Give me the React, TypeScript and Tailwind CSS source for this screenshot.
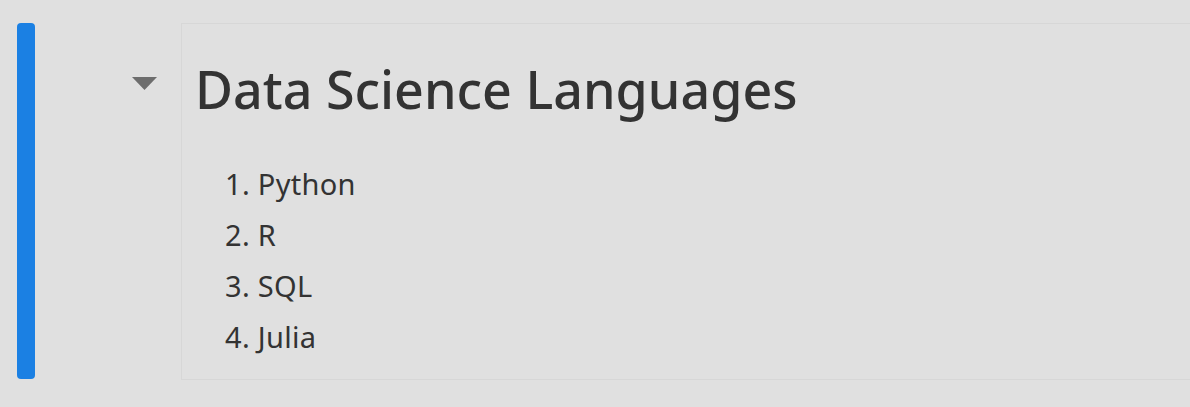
export default function App() {
  const items = ["Python", "R", "SQL", "Julia"];
  return (
    <div
      className="w-[1190px] h-[407px] overflow-hidden bg-[#e0e0e0] flex pt-[23px] pl-[17px]"
      style={{ fontFamily: '"Noto Sans", "Open Sans", sans-serif' }}
    >
      <div className="w-[18px] h-[356px] rounded-[4px] bg-[#1b80e3] shrink-0" />
      <div className="w-[146px] shrink-0 relative">
        <svg
          className="absolute left-[97px] top-[54px]"
          width="25"
          height="13"
          viewBox="0 0 25 13"
        >
          <polygon points="0,0 25,0 12.5,13" fill="#6d6d6d" />
        </svg>
      </div>
      <div className="w-[1020px] h-[357px] shrink-0 border border-[#d7d7d7] pl-[13px] text-[#333333]">
        <h1 className="text-[52px] leading-none font-medium mt-[39px]">
          Data Science Languages
        </h1>
        <ol className="mt-[43px] pl-[30px] text-[29px] leading-[51px] tracking-[0.3px]">
          {items.map((it, i) => (
            <li key={it}>
              {i + 1}. {it}
            </li>
          ))}
        </ol>
      </div>
    </div>
  );
}
